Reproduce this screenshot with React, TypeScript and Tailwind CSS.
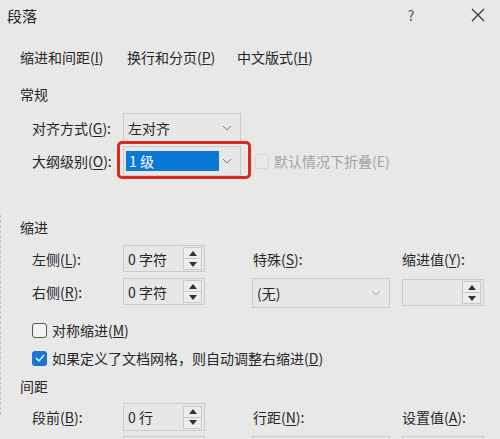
import React from "react"

const Chevron = ({ light }: { light?: boolean }) => (
  <svg width="10" height="6" viewBox="0 0 10 6" className="shrink-0">
    <path d="M1 1 L5 5 L9 1" fill="none" stroke={light ? "#a8a8a8" : "#7a7a7a"} strokeWidth="1" />
  </svg>
)

const Spinner = () => (
  <div className="flex flex-col w-[19px] h-[23px] border border-[#c9c9c9] bg-[#ededed]">
    <div className="flex-1 flex items-center justify-center border-b border-[#c9c9c9]">
      <svg width="8" height="5" viewBox="0 0 8 5"><path d="M4 0 L8 5 L0 5 Z" fill="#333" /></svg>
    </div>
    <div className="flex-1 flex items-center justify-center">
      <svg width="8" height="5" viewBox="0 0 8 5"><path d="M0 0 L8 0 L4 5 Z" fill="#333" /></svg>
    </div>
  </div>
)

const SpinBox = ({ value, w = "w-[82px]", h = "h-[27px]" }: { value: string; w?: string; h?: string }) => (
  <div className={`${w} ${h} flex items-center justify-between pl-[4px] pr-[2px] border border-[#cacaca] bg-[#e7e7e7]`}>
    <span>{value}</span>
    <Spinner />
  </div>
)

const Label = ({ text, k, tail = "):" }: { text: string; k: string; tail?: string }) => (
  <span>
    {text}(<u className="underline-offset-2">{k}</u>{tail}
  </span>
)

const App = () => {
  return (
    <div className="relative w-[500px] h-[439px] overflow-hidden bg-[#e8e8e8] text-[14px] leading-none text-[#262626] font-['Noto_Sans_CJK_SC',sans-serif]">
      {/* title bar */}
      <div className="flex items-center h-[30px] pl-[7px]">
        <span className="text-[15px]">段落</span>
        <span className="ml-auto w-[20px] text-center text-[14px] text-[#555]">?</span>
        <div className="w-[50px]" />
        <svg width="14" height="14" viewBox="0 0 14 14" className="mr-[15px]">
          <path d="M1 1 L13 13 M13 1 L1 13" stroke="#333" strokeWidth="1.2" />
        </svg>
      </div>

      {/* tabs */}
      <div className="flex items-center h-[24px] mt-[15px] pl-[20px]">
        <span className="w-[107px]">缩进和间距(<u>I</u>)</span>
        <span className="w-[110px]">换行和分页(<u>P</u>)</span>
        <span>中文版式(<u>H</u>)</span>
      </div>

      {/* 常规 */}
      <div className="pl-[20px] mt-[16px] h-[18px] flex items-center">常规</div>
      <div className="pl-[32px] mt-[10px] flex flex-col gap-[3px]">
        <div className="flex items-center h-[30px]">
          <div className="w-[91px]"><Label text="对齐方式" k="G" /></div>
          <div className="w-[118px] h-[30px] flex items-center justify-between pl-[4px] pr-[8px] border border-[#cacaca] bg-[#e7e7e7]">
            <span>左对齐</span>
            <Chevron />
          </div>
        </div>
        <div className="flex items-center h-[30px]">
          <div className="w-[91px]"><Label text="大纲级别" k="O" /></div>
          <div className="w-[118px] h-[30px] flex items-center justify-between pl-[2px] pr-[8px] border border-[#cacaca] bg-[#e7e7e7]">
            <span className="w-[93px] h-[20px] flex items-center pl-[3px] bg-[#0b78d6] text-white">1 级</span>
            <Chevron />
          </div>
          <div className="ml-[14px] w-[14px] h-[15px] rounded-[3px] border border-[#d6d6d6]" />
          <span className="ml-[5px] text-[#a3a3a3]">默认情况下折叠(E)</span>
        </div>
      </div>

      {/* 缩进 */}
      <div className="pl-[20px] mt-[42px] h-[18px] flex items-center">缩进</div>
      <div className="pl-[32px] mt-[9px] flex">
        <div className="flex flex-col gap-[6px]">
          <div className="flex items-center h-[27px]">
            <div className="w-[91px]"><Label text="左侧" k="L" /></div>
            <SpinBox value="0 字符" />
          </div>
          <div className="flex items-center h-[27px]">
            <div className="w-[91px]"><Label text="右侧" k="R" /></div>
            <SpinBox value="0 字符" />
          </div>
        </div>
        <div className="ml-[47px] flex flex-col">
          <div className="h-[27px] flex items-center pl-[1px]"><Label text="特殊" k="S" /></div>
          <div className="mt-[6px] w-[138px] h-[30px] flex items-center justify-between pl-[4px] pr-[8px] border border-[#cacaca] bg-[#e7e7e7]">
            <span>(无)</span>
            <Chevron light />
          </div>
        </div>
        <div className="ml-[12px] flex flex-col">
          <div className="h-[27px] flex items-center"><Label text="缩进值" k="Y" /></div>
          <div className="mt-[7px]"><SpinBox value="" /></div>
        </div>
      </div>

      {/* checkboxes */}
      <div className="pl-[32px] mt-[14px] flex flex-col gap-[12px]">
        <div className="flex items-center h-[16px]">
          <div className="w-[15px] h-[15px] rounded-[3px] border border-[#555] bg-[#f3f3f3]" />
          <span className="ml-[5px]">对称缩进(<u>M</u>)</span>
        </div>
        <div className="flex items-center h-[16px]">
          <div className="w-[15px] h-[15px] rounded-[3px] bg-[#1877d2] flex items-center justify-center">
            <svg width="10" height="8" viewBox="0 0 10 8"><path d="M1 4 L4 7 L9 1" fill="none" stroke="#fff" strokeWidth="1.3" /></svg>
          </div>
          <span className="ml-[5px]">如果定义了文档网格，则自动调整右缩进(<u>D</u>)</span>
        </div>
      </div>

      {/* 间距 */}
      <div className="pl-[20px] mt-[11px] h-[18px] flex items-center">间距</div>
      <div className="pl-[32px] mt-[8px] flex flex-col gap-[5px]">
        <div className="flex items-center h-[28px]">
          <div className="w-[91px]"><Label text="段前" k="B" /></div>
          <SpinBox value="0 行" h="h-[28px]" />
          <div className="ml-[48px] w-[149px]"><Label text="行距" k="N" /></div>
          <Label text="设置值" k="A" />
        </div>
        <div className="flex items-start h-[28px]">
          <div className="w-[91px]" />
          <div className="w-[82px] h-[28px] border border-[#cacaca]" />
          <div className="ml-[47px] w-[138px] h-[28px] border border-[#cacaca]" />
          <div className="ml-[12px] w-[82px] h-[28px] border border-[#cacaca]" />
        </div>
      </div>

      {/* left edge dashes */}
      <div className="absolute left-0 top-[215px] h-[200px] border-l border-dashed border-[#c2c2c2]" />

      {/* red annotation */}
      <div className="absolute left-[117px] top-[141px] w-[134px] h-[38px] border-[3px] border-[#dd2a1f] rounded-[5px]" />
    </div>
  )
}

export default App
